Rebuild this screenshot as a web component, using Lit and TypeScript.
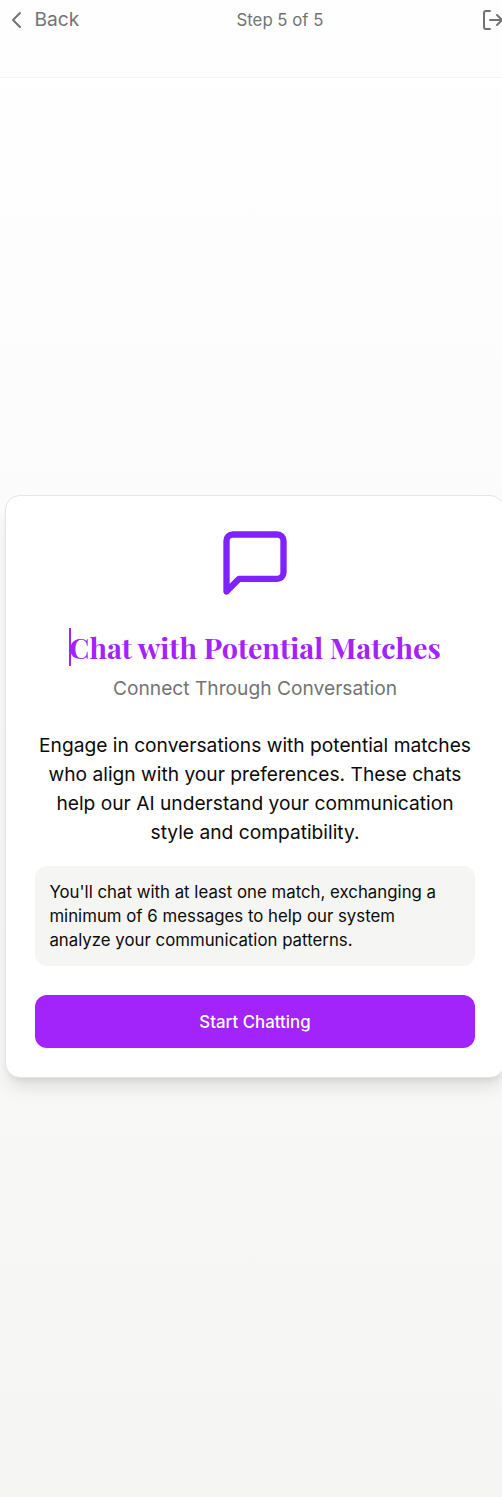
import { LitElement, html, css } from "lit";
import { customElement } from "lit/decorators.js";

@customElement("app-root")
export class AppRoot extends LitElement {
  static styles = css`
    :host {
      display: flex;
      flex-direction: column;
      width: 502px;
      height: 1497px;
      overflow: hidden;
      box-sizing: border-box;
      background: linear-gradient(to bottom, #ffffff, #f5f5f4);
      font-family: Inter, sans-serif;
      font-size: 19.2px;
      line-height: 29px;
      color: #0c0a09;
    }
    * {
      box-sizing: border-box;
    }
    .header {
      flex: none;
      height: 78px;
      width: 510px;
      padding: 0 5px;
      border-bottom: 1px solid #f3f3f2;
      background: #fefefe;
      color: #737373;
    }
    .bar {
      display: grid;
      grid-template-columns: 1fr auto 1fr;
      align-items: center;
      height: 40px;
    }
    button {
      font: inherit;
      border: 0;
      background: none;
      color: inherit;
      padding: 0;
    }
    .back {
      display: flex;
      align-items: center;
      gap: 5.5px;
    }
    .back span {
      padding-bottom: 2px;
    }
    .step {
      font-size: 16.8px;
      line-height: 24px;
      margin-left: 50px;
    }
    .exit {
      justify-self: end;
      display: flex;
    }
    svg {
      fill: none;
      stroke: currentColor;
      stroke-width: 2;
      stroke-linecap: round;
      stroke-linejoin: round;
    }
    .main {
      flex: 1;
      display: flex;
      align-items: center;
      padding: 0 0 2px 5px;
    }
    .card {
      flex: none;
      width: 500px;
      height: 583px;
      padding: 28px 29px;
      border: 1px solid #e5e5e5;
      border-radius: 15px;
      background: #fff;
      box-shadow: 0 12px 18px -3px rgba(0, 0, 0, 0.1), 0 5px 7px -4px rgba(0, 0, 0, 0.1);
      display: flex;
      flex-direction: column;
      text-align: center;
    }
    .icon {
      display: flex;
      align-items: center;
      justify-content: center;
      height: 77px;
      color: #7f22fe;
    }
    .title {
      align-self: center;
      margin: 27px 0 0;
      height: 38px;
      border-left: 2px solid #a323fb;
      font-family: "Playfair Display", "Liberation Serif", serif;
      font-weight: 700;
      font-size: 28.8px;
      line-height: 38px;
      text-indent: -2px;
      white-space: nowrap;
      color: #a323fb;
    }
    .subtitle {
      margin: 8px 0 0;
      color: #737373;
    }
    .text {
      margin: 28px 0 0;
      white-space: nowrap;
    }
    .note {
      margin: 19px 0 0;
      padding: 14px 14.4px;
      height: 100px;
      border-radius: 12px;
      background: #f5f5f4;
      font-size: 16.8px;
      line-height: 24px;
      letter-spacing: 0.015px;
      text-align: left;
      white-space: nowrap;
    }
    .start {
      margin-top: 29px;
      height: 53px;
      padding-top: 2px;
      flex: none;
      border-radius: 12px;
      background: #a323fb;
      color: #fff;
      font-size: 16.8px;
      font-weight: 500;
      letter-spacing: 0.05px;
    }
  `;

  render() {
    return html`
      <header class="header">
        <div class="bar">
          <button class="back">
            <svg width="24" height="24" viewBox="0 0 24 24"><path d="m15 19-7-7 7-7" /></svg>
            <span>Back</span>
          </button>
          <span class="step">Step 5 of 5</span>
          <button class="exit" aria-label="Log out">
            <svg width="24" height="24" viewBox="0 0 24 24">
              <path d="M9 21H5a2 2 0 0 1-2-2V5a2 2 0 0 1 2-2h4" />
              <path d="m16 17 5-5-5-5M21 12H9" />
            </svg>
          </button>
        </div>
      </header>
      <main class="main">
        <section class="card">
          <div class="icon">
            <svg width="76" height="76" viewBox="0 0 24 24">
              <path d="M21 15a2 2 0 0 1-2 2H7l-4 4V5a2 2 0 0 1 2-2h14a2 2 0 0 1 2 2z" />
            </svg>
          </div>
          <h1 class="title">Chat with Potential Matches</h1>
          <p class="subtitle">Connect Through Conversation</p>
          <p class="text">
            Engage in conversations with potential matches<br />who align with your preferences. These chats<br />help
            our AI understand your communication<br />style and compatibility.
          </p>
          <div class="note">
            You'll chat with at least one match, exchanging a<br />minimum of 6 messages to help our system<br />analyze
            your communication patterns.
          </div>
          <button class="start">Start Chatting</button>
        </section>
      </main>
    `;
  }
}
